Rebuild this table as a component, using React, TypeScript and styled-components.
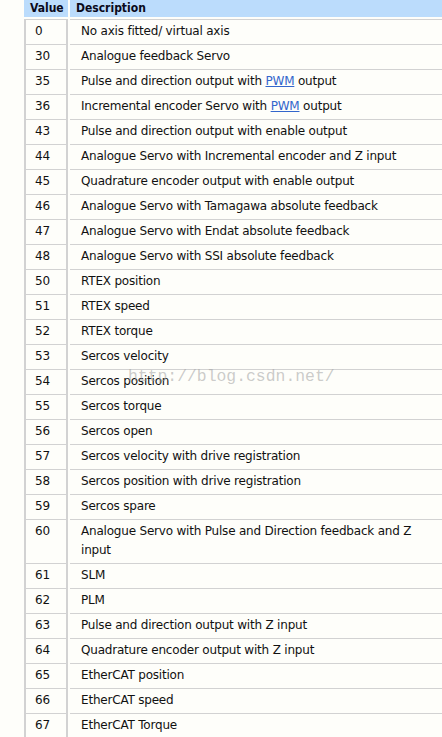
import React from "react";
import styled, { createGlobalStyle } from "styled-components";

const Global = createGlobalStyle`
  html, body {
    margin: 0;
    padding: 0;
    background: #fefefa;
    overflow: hidden;
  }
  body {
    font-family: "DejaVu Sans", "Liberation Sans", sans-serif;
    font-size: 12px;
    letter-spacing: -0.2px;
    color: #111;
  }
`;

const Page = styled.div`
  position: relative;
  width: 442px;
  height: 737px;
  overflow: hidden;
`;

const Table = styled.table`
  margin-left: 22px;
  border-collapse: separate;
  border-spacing: 2px 0;
  width: 440px;
  table-layout: fixed;
`;

const HeadCell = styled.th<{ $w?: number }>`
  background: #bbdcfc;
  background-clip: padding-box;
  border-bottom: 2px solid transparent;
  padding: 1px 6px;
  line-height: 15px;
  text-align: left;
  font-family: "DejaVu Sans Condensed", "Liberation Sans", sans-serif;
  font-weight: bold;
  letter-spacing: 0;
  color: #0a0a1a;
  ${(p) => (p.$w ? `width: ${p.$w}px;` : "")}
`;

const ValueCell = styled.td`
  border-top: 1px solid #d2d2d2;
  border-left: 2px solid #d2d2d2;
  border-right: 2px solid #d2d2d2;
  padding: 2px 0 3px 9px;
  line-height: 19px;
  vertical-align: top;
`;

const DescCell = styled.td`
  border-top: 1px solid #d2d2d2;
  padding: 2px 24px 3px 11px;
  line-height: 19px;
  vertical-align: top;
`;

const Link = styled.a`
  color: #3366cc;
  text-decoration: underline;
`;

const Watermark = styled.div`
  position: absolute;
  left: 128px;
  top: 367px;
  font-family: "Liberation Mono", monospace;
  font-size: 16.4px;
  letter-spacing: 0;
  color: rgba(160, 160, 160, 0.55);
  pointer-events: none;
  white-space: nowrap;
`;

type Row = [string, React.ReactNode];

const rows: Row[] = [
  ["0", "No axis fitted/ virtual axis"],
  ["30", "Analogue feedback Servo"],
  ["35", <>Pulse and direction output with <Link>PWM</Link> output</>],
  ["36", <>Incremental encoder Servo with <Link>PWM</Link> output</>],
  ["43", "Pulse and direction output with enable output"],
  ["44", "Analogue Servo with Incremental encoder and Z input"],
  ["45", "Quadrature encoder output with enable output"],
  ["46", "Analogue Servo with Tamagawa absolute feedback"],
  ["47", "Analogue Servo with Endat absolute feedback"],
  ["48", "Analogue Servo with SSI absolute feedback"],
  ["50", "RTEX position"],
  ["51", "RTEX speed"],
  ["52", "RTEX torque"],
  ["53", "Sercos velocity"],
  ["54", "Sercos position"],
  ["55", "Sercos torque"],
  ["56", "Sercos open"],
  ["57", "Sercos velocity with drive registration"],
  ["58", "Sercos position with drive registration"],
  ["59", "Sercos spare"],
  ["60", "Analogue Servo with Pulse and Direction feedback and Z input"],
  ["61", "SLM"],
  ["62", "PLM"],
  ["63", "Pulse and direction output with Z input"],
  ["64", "Quadrature encoder output with Z input"],
  ["65", "EtherCAT position"],
  ["66", "EtherCAT speed"],
  ["67", "EtherCAT Torque"],
];

export default function App() {
  return (
    <Page>
      <Global />
      <Table>
        <thead>
          <tr>
            <HeadCell $w={32}>Value</HeadCell>
            <HeadCell>Description</HeadCell>
          </tr>
        </thead>
        <tbody>
          {rows.map(([v, d]) => (
            <tr key={v}>
              <ValueCell>{v}</ValueCell>
              <DescCell>{d}</DescCell>
            </tr>
          ))}
        </tbody>
      </Table>
      <Watermark>http://blog.csdn.net/</Watermark>
    </Page>
  );
}
